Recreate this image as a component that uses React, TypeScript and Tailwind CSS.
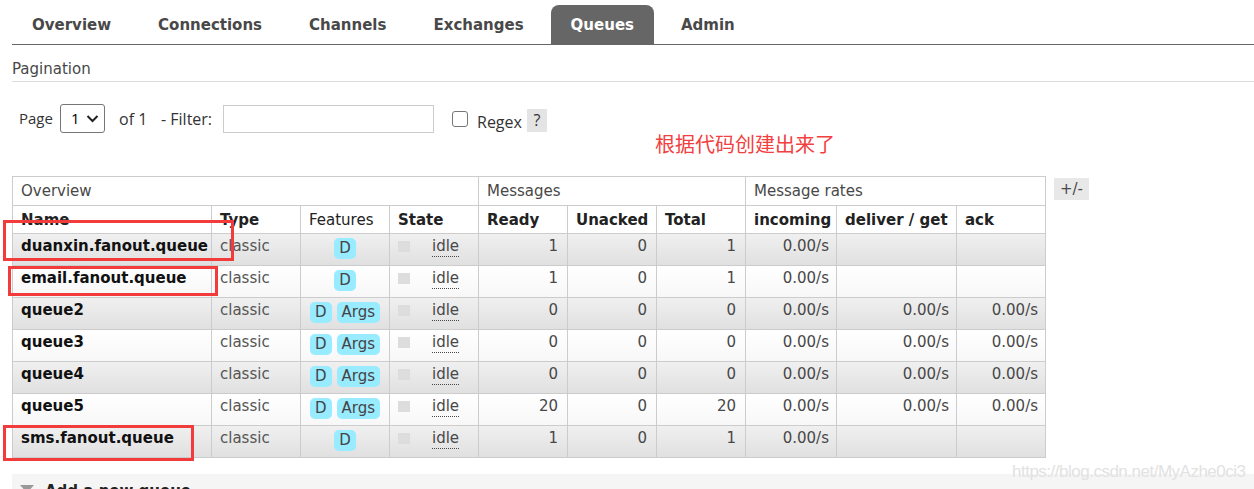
import React from 'react';

type Row = {
  name: string;
  args: boolean;
  ready: string;
  unacked: string;
  total: string;
  incoming: string;
  deliver: string;
  ack: string;
};

const rows: Row[] = [
  { name: 'duanxin.fanout.queue', args: false, ready: '1', unacked: '0', total: '1', incoming: '0.00/s', deliver: '', ack: '' },
  { name: 'email.fanout.queue', args: false, ready: '1', unacked: '0', total: '1', incoming: '0.00/s', deliver: '', ack: '' },
  { name: 'queue2', args: true, ready: '0', unacked: '0', total: '0', incoming: '0.00/s', deliver: '0.00/s', ack: '0.00/s' },
  { name: 'queue3', args: true, ready: '0', unacked: '0', total: '0', incoming: '0.00/s', deliver: '0.00/s', ack: '0.00/s' },
  { name: 'queue4', args: true, ready: '0', unacked: '0', total: '0', incoming: '0.00/s', deliver: '0.00/s', ack: '0.00/s' },
  { name: 'queue5', args: true, ready: '20', unacked: '0', total: '20', incoming: '0.00/s', deliver: '0.00/s', ack: '0.00/s' },
  { name: 'sms.fanout.queue', args: false, ready: '1', unacked: '0', total: '1', incoming: '0.00/s', deliver: '', ack: '' },
];

const tabs = ['Overview', 'Connections', 'Channels', 'Exchanges', 'Queues', 'Admin'];

const Badge = ({ children }: { children: React.ReactNode }) => (
  <span className="inline-block h-[21px] rounded-[5px] bg-[#99ebff] px-[5px] leading-[21px] text-[#444]">
    {children}
  </span>
);

export default function App() {
  return (
    <div className="relative h-[489px] w-[1254px] overflow-hidden bg-white pl-[12px] font-['DejaVu_Sans',Verdana,sans-serif] text-[15px] text-[#484848]">
      {/* top menu */}
      <div className="flex h-[45px] items-end gap-[7px] border-b border-[#666]">
        {tabs.map((t) => (
          <div
            key={t}
            className={`flex h-[39px] items-center rounded-t-[8px] px-5 pt-[2px] font-bold ${
              t === 'Queues' ? 'bg-[#666] text-white' : 'text-[#484848]'
            }`}
          >
            {t}
          </div>
        ))}
      </div>

      {/* pagination */}
      <div className="mt-[15px] border-b border-[#ddd] pb-[3px] leading-[18px]">Pagination</div>

      <div className="mt-[22px] flex h-[29px] items-center pl-[7px] font-['Open_Sans',sans-serif] text-[16px] text-[#333]">
        <span className="w-[31px] text-[15px]">Page</span>
        <div className="ml-[10px] flex h-[29px] w-[45px] items-center justify-between rounded-[3px] border border-[#767676] pl-[10px] pr-[5px] text-[15px] text-black">
          <span>1</span>
          <svg width="13" height="9" viewBox="0 0 13 9">
            <polyline points="1.5,2 6.5,7 11.5,2" fill="none" stroke="#222" strokeWidth="2" />
          </svg>
        </div>
        <span className="ml-[14px] w-[29px] whitespace-nowrap">of 1</span>
        <span className="ml-[13px] w-[56px] whitespace-nowrap">- Filter:</span>
        <div className="ml-[6px] h-[28px] w-[211px] border border-[#ccc] bg-white" />
        <div className="ml-[18px] h-[16px] w-[16px] rounded-[3px] border border-[#767676] bg-white" />
        <span className="ml-[9px] mt-[6px] w-[46px]">Regex</span>
        <span className="ml-[4px] mt-[3px] flex h-[23px] w-[20px] items-center justify-center bg-[#e4e4e4]">?</span>
      </div>

      {/* queues table */}
      <div className="mt-[43px] flex items-start gap-2">
        <table className="w-[1033px] table-fixed border-collapse">
          <colgroup>
            <col className="w-[199px]" />
            <col className="w-[89px]" />
            <col className="w-[89px]" />
            <col className="w-[89px]" />
            <col className="w-[89px]" />
            <col className="w-[89px]" />
            <col className="w-[89px]" />
            <col className="w-[91px]" />
            <col className="w-[120px]" />
            <col className="w-[89px]" />
          </colgroup>
          <thead>
            <tr className="h-[29px]">
              <th colSpan={4} className="border border-[#ccc] px-2 text-left font-normal">Overview</th>
              <th colSpan={3} className="border border-[#ccc] px-2 text-left font-normal">Messages</th>
              <th colSpan={3} className="border border-[#ccc] px-2 text-left font-normal">Message rates</th>
            </tr>
            <tr className="h-[28px] text-left text-[#222]">
              <th className="border border-[#ccc] px-2 pt-[2px]">Name</th>
              <th className="border border-[#ccc] px-2 pt-[2px]">Type</th>
              <th className="border border-[#ccc] px-2 pt-[2px] font-normal">Features</th>
              <th className="border border-[#ccc] px-2 pt-[2px]">State</th>
              <th className="border border-[#ccc] px-2 pt-[2px]">Ready</th>
              <th className="border border-[#ccc] px-2 pt-[2px]">Unacked</th>
              <th className="border border-[#ccc] px-2 pt-[2px]">Total</th>
              <th className="border border-[#ccc] px-2 pt-[2px]">incoming</th>
              <th className="border border-[#ccc] px-2 pt-[2px]">deliver / get</th>
              <th className="border border-[#ccc] px-2 pt-[2px]">ack</th>
            </tr>
          </thead>
          <tbody>
            {rows.map((r, i) => (
              <tr
                key={r.name}
                className={`h-[32px] align-top leading-[18px] ${
                  i % 2 === 0 ? 'bg-linear-to-b from-[#f0f0f0] to-[#e0e0e0]' : 'bg-linear-to-b from-white to-[#f7f7f7]'
                }`}
              >
                <td className="border border-[#ccc] px-2 pt-[3px] font-bold text-[#111]">{r.name}</td>
                <td className="border border-[#ccc] px-2 pt-[3px] text-[#555]">classic</td>
                <td className="border border-[#ccc] px-1 pt-[4px]">
                  <div className="flex justify-center gap-[5px]">
                    <Badge>D</Badge>
                    {r.args && <Badge>Args</Badge>}
                  </div>
                </td>
                <td className="border border-[#ccc] pl-2 pt-[3px]">
                  <div className="flex">
                    <span className="mt-[4px] h-[11px] w-[12px] bg-[#ddd]" />
                    <span className="ml-[22px] border-b border-dotted border-[#484848] leading-[19px]">idle</span>
                  </div>
                </td>
                <td className="border border-[#ccc] pr-[9px] pt-[3px] text-right">{r.ready}</td>
                <td className="border border-[#ccc] pr-[9px] pt-[3px] text-right">{r.unacked}</td>
                <td className="border border-[#ccc] pr-[9px] pt-[3px] text-right">{r.total}</td>
                <td className="border border-[#ccc] pr-[7px] pt-[3px] text-right">{r.incoming}</td>
                <td className="border border-[#ccc] pr-[7px] pt-[3px] text-right">{r.deliver}</td>
                <td className="border border-[#ccc] pr-[7px] pt-[3px] text-right">{r.ack}</td>
              </tr>
            ))}
          </tbody>
        </table>
        <div className="mt-[2px] flex h-[22px] w-[35px] items-center justify-center bg-[#e8e8e8]">+/-</div>
      </div>

      {/* add a new queue */}
      <div className="mt-[16px] flex h-[40px] items-start gap-[11px] bg-[#f5f5f5] pl-[8px] pt-[6px]">
        <svg width="14" height="8" viewBox="0 0 14 8" className="mt-[5px]">
          <polygon points="0,0 14,0 7,8" fill="#999" />
        </svg>
        <span className="font-bold text-[#222]">Add a new queue</span>
      </div>

      {/* annotations */}
      <div className="absolute left-[655px] top-[132px] font-['Noto_Sans_CJK_SC',sans-serif] text-[20px] leading-[24px] text-[#f24040]">
        根据代码创建出来了
      </div>
      <div className="absolute left-[3px] top-[220px] h-[41px] w-[231px] border-[3px] border-[#f23b3b]" />
      <div className="absolute left-[8px] top-[266px] h-[30px] w-[210px] border-[3px] border-[#f23b3b]" />
      <div className="absolute left-[3px] top-[425px] h-[36px] w-[191px] border-[3px] border-[#f23b3b]" />
      <div className="absolute left-[1012px] top-[459px] font-['Liberation_Sans',Arial,sans-serif] text-[17px] tracking-[-0.5px] text-[#e2e2e2]">
        https://blog.csdn.net/MyAzhe0ci3
      </div>
    </div>
  );
}
